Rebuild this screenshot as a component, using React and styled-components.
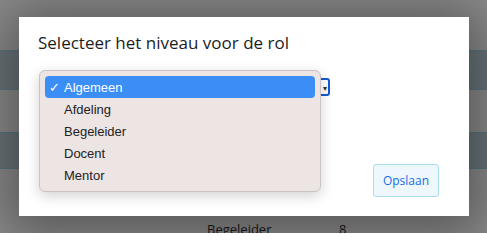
import React from "react";
import styled, { createGlobalStyle } from "styled-components";

const Global = createGlobalStyle`
  html, body { margin: 0; padding: 0; }
  body { width: 487px; height: 233px; overflow: hidden; background: #fff; }
  * { box-sizing: border-box; }
`;

const Stage = styled.div`
  position: relative;
  width: 487px;
  height: 233px;
  overflow: hidden;
  font-family: "Open Sans", "Liberation Sans", sans-serif;
`;

const Table = styled.div`
  display: flex;
  flex-direction: column;
`;

const Row = styled.div`
  height: ${(p) => p.h}px;
  background: ${(p) => (p.tint ? "#b2c6cf" : "#ececec")};
  border-bottom: ${(p) => (p.line ? "1px solid #94c6dc" : "none")};
  display: flex;
  align-items: center;
  font-size: 13px;
  color: #2a2a2a;
`;

const Cell = styled.div`
  width: ${(p) => p.w}px;
  flex: none;
`;

const Backdrop = styled.div`
  position: absolute;
  inset: 0;
  background: rgba(0, 0, 0, 0.4);
`;

const Dialog = styled.div`
  position: absolute;
  left: 19px;
  top: 17px;
  width: 450px;
  height: 199px;
  background: #fff;
  box-shadow: 0 6px 50px 14px rgba(0, 0, 0, 0.38);
  display: flex;
  flex-direction: column;
  padding: 14px 30px 19px 19px;
`;

const Title = styled.h2`
  margin: 0;
  font-family: "Open Sans", sans-serif;
  font-weight: 400;
  font-size: 17px;
  line-height: 24px;
  color: #1c1c1c;
`;

const Body = styled.div`
  position: relative;
  margin-top: 23px;
`;

const SelectBox = styled.div`
  margin-left: 10px;
  width: 282px;
  height: 18px;
  border: 2px solid #1459d4;
  border-radius: 3px;
  display: flex;
  align-items: center;
  justify-content: flex-end;
  padding-right: 1px;
  font-size: 8px;
  color: #333;
`;

const Menu = styled.ul`
  position: absolute;
  left: 1px;
  top: -8px;
  width: 282px;
  margin: 0;
  padding: 5px;
  list-style: none;
  background: #ede4e4;
  border: 1px solid #cbc3c3;
  border-radius: 6px;
  box-shadow: 0 4px 14px rgba(0, 0, 0, 0.18);
  font-family: "Liberation Sans", Arial, sans-serif;
  font-size: 13px;
`;

const Item = styled.li`
  height: 22px;
  display: flex;
  align-items: center;
  padding-left: 4px;
  border-radius: 4px;
  color: ${(p) => (p.selected ? "#fff" : "#222")};
  background: ${(p) => (p.selected ? "#3a8ef6" : "transparent")};
`;

const Check = styled.span`
  width: 15px;
  flex: none;
  font-size: 13px;
`;

const Footer = styled.div`
  margin-top: auto;
  display: flex;
  justify-content: flex-end;
`;

const Button = styled.button`
  width: 66px;
  height: 33px;
  background: #eef7fc;
  border: 1px solid #acdcf2;
  border-radius: 3px;
  color: #1670e0;
  font-family: "Open Sans", sans-serif;
  font-size: 12px;
  padding: 0;
`;

const items = ["Algemeen", "Afdeling", "Begeleider", "Docent", "Mentor"];

export default function App() {
  return (
    <Stage>
      <Global />
      <Table>
        <Row h={51} line />
        <Row h={39} tint line />
        <Row h={43} line />
        <Row h={36} tint line />
        <Row h={47} />
        <Row h={26}>
          <Cell w={207} />
          <Cell w={132}>Begeleider</Cell>
          <Cell w={40}>8</Cell>
        </Row>
      </Table>
      <Backdrop />
      <Dialog>
        <Title>Selecteer het niveau voor de rol</Title>
        <Body>
          <SelectBox>▾</SelectBox>
          <Menu>
            {items.map((it, i) => (
              <Item key={it} selected={i === 0}>
                <Check>{i === 0 ? "✓" : ""}</Check>
                {it}
              </Item>
            ))}
          </Menu>
        </Body>
        <Footer>
          <Button>Opslaan</Button>
        </Footer>
      </Dialog>
    </Stage>
  );
}
